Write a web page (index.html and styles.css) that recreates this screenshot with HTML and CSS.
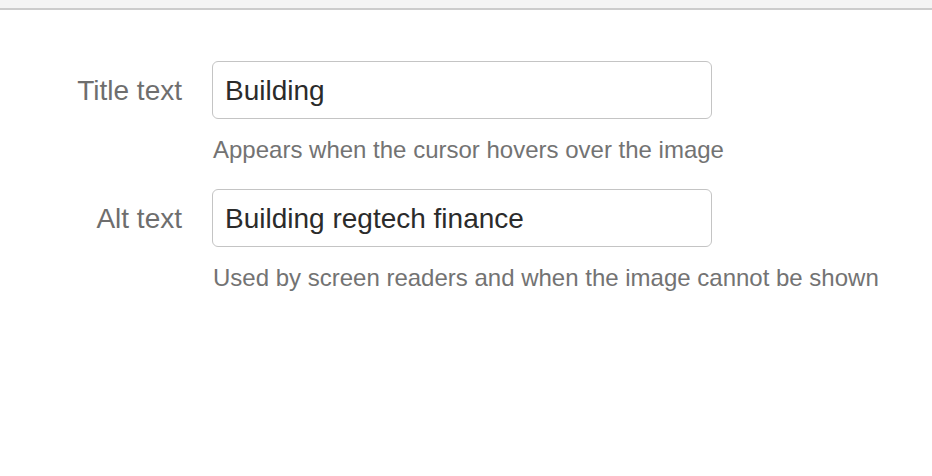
FILE: index.html
```html
<!DOCTYPE html>
<html lang="en">
<head>
<meta charset="utf-8">
<title>Image properties</title>
<link rel="stylesheet" href="styles.css">
</head>
<body>
<div class="topbar"></div>
<form class="form">
  <div class="row">
    <label class="label" for="title">Title text</label>
    <div class="field">
      <input class="input" id="title" type="text" value="Building">
      <div class="help">Appears when the cursor hovers over the image</div>
    </div>
  </div>
  <div class="row">
    <label class="label" for="alt">Alt text</label>
    <div class="field">
      <input class="input" id="alt" type="text" value="Building regtech finance">
      <div class="help">Used by screen readers and when the image cannot be shown</div>
    </div>
  </div>
</form>
</body>
</html>
```
FILE: styles.css
```css
* { box-sizing: border-box; }
html, body {
  margin: 0;
  background: #ffffff;
  font-family: "Liberation Sans", Arial, Helvetica, sans-serif;
}
.topbar {
  height: 10px;
  background: #f4f4f4;
  border-bottom: 2px solid #cccccc;
}
.form {
  padding-top: 51px;
  display: flex;
  flex-direction: column;
  gap: 24px;
}
.row {
  display: flex;
  align-items: baseline;
  gap: 30px;
}
.label {
  width: 182px;
  text-align: right;
  font-size: 28px;
  color: #6e6e6e;
}
.field {
  display: flex;
  flex-direction: column;
}
.input {
  width: 500px;
  height: 58px;
  margin: 0;
  padding: 2px 12px 0;
  border: 1px solid #c4c4c4;
  border-radius: 6px;
  font-family: inherit;
  font-size: 28px;
  color: #2b2b2b;
  background: #fff;
  outline: none;
}
.help {
  margin-top: 16px;
  padding-left: 1px;
  font-size: 24px;
  line-height: 30px;
  color: #737373;
}
```
